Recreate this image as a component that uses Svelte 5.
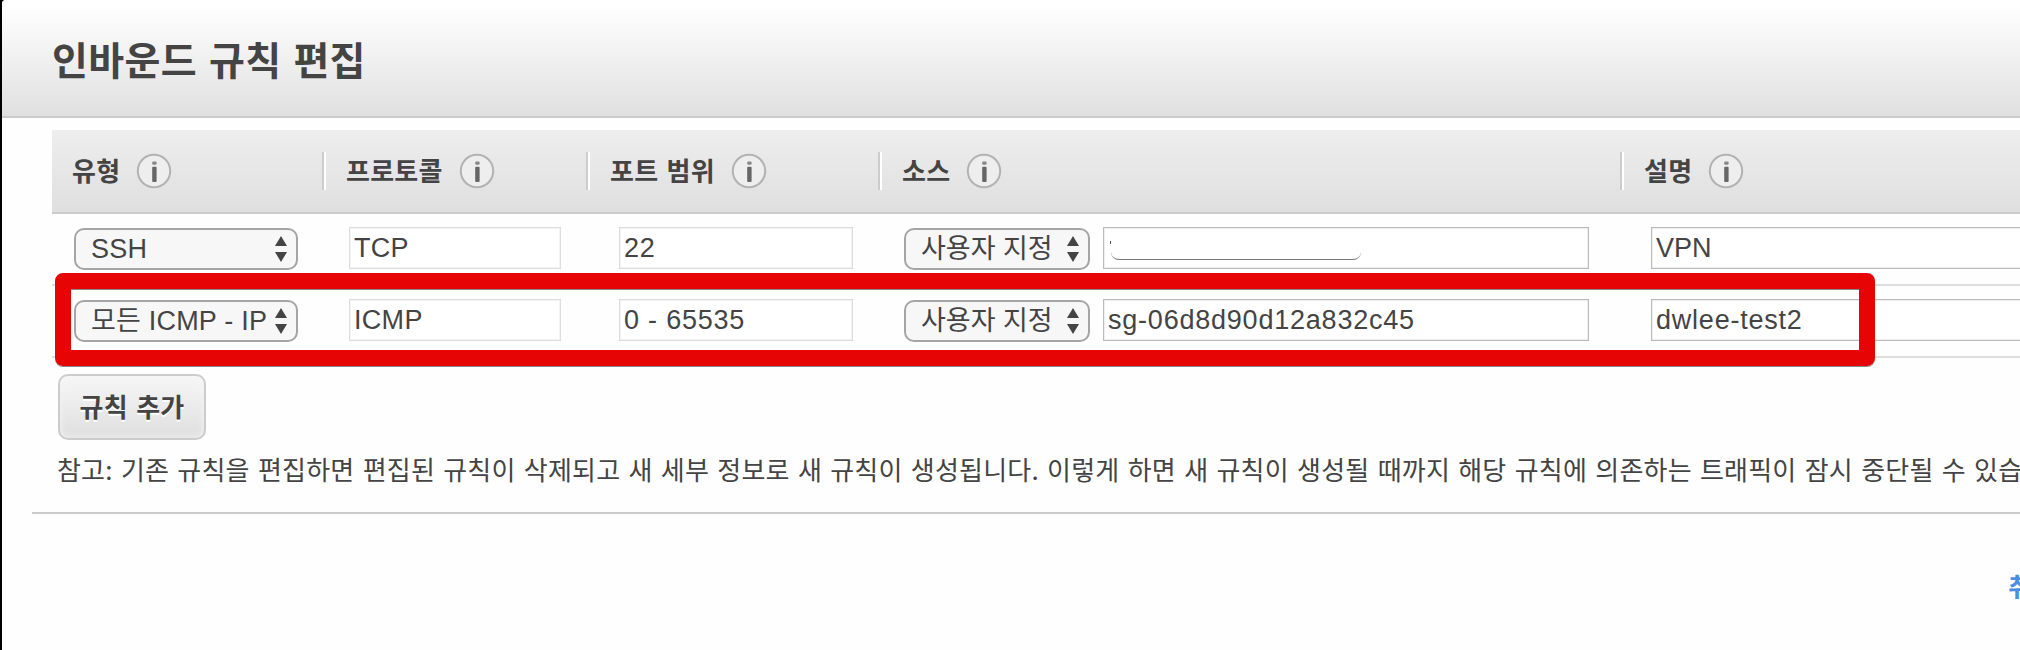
<script>
  const columns = ['유형', '프로토콜', '포트 범위', '소스', '설명'];
  const rules = [
    { type: 'SSH', protocol: 'TCP', port: '22', from: '사용자 지정', source: '', desc: 'VPN', hidden: true },
    { type: '모든 ICMP - IPv4', protocol: 'ICMP', port: '0 - 65535', from: '사용자 지정', source: 'sg-06d8d90d12a832c45', desc: 'dwlee-test2', hidden: false }
  ];
</script>

{#snippet info()}
  <svg class="info" width="36" height="36" viewBox="0 0 36 36">
    <circle cx="18" cy="18" r="16.2" fill="#eeeeee" stroke="#b2b2b2" stroke-width="2" />
    <rect x="16.2" y="8.5" width="4.4" height="3.2" rx="1" fill="#888" />
    <rect x="16.2" y="13.8" width="4.4" height="15.2" rx="1" fill="#666" />
  </svg>
{/snippet}

{#snippet select(label)}
  <div class="select">
    <span class="value">{label}</span>
    <svg width="14" height="26" viewBox="0 0 14 26">
      <path d="M7 0L13 10H1Z M7 26L13 16H1Z" fill="#444" />
    </svg>
  </div>
{/snippet}

<div class="dialog">
  <header><h1>인바운드 규칙 편집</h1></header>
  <main>
    <div class="table">
      <div class="grid head">
        {#each columns as name}
          <div class="th"><span>{name}</span>{@render info()}</div>
        {/each}
      </div>
      {#each rules as rule}
        <div class="grid row">
          <div class="cell type">{@render select(rule.type)}</div>
          <div class="cell protocol"><div class="input off">{rule.protocol}</div></div>
          <div class="cell port"><div class="input off">{rule.port}</div></div>
          <div class="cell source">
            {@render select(rule.from)}
            <div class="input">{rule.source}{#if rule.hidden}<i class="cover"></i>{/if}</div>
          </div>
          <div class="cell desc"><div class="input" class:caps={rule.desc === rule.desc.toUpperCase()}>{rule.desc}</div></div>
        </div>
      {/each}
      <div class="highlight"></div>
    </div>
    <button>규칙 추가</button>
    <p>참고: 기존 규칙을 편집하면 편집된 규칙이 삭제되고 새 세부 정보로 새 규칙이 생성됩니다. 이렇게 하면 새 규칙이 생성될 때까지 해당 규칙에 의존하는 트래픽이 잠시 중단될 수 있습니다.</p>
  </main>
  <footer><a href="#cancel">취소</a></footer>
</div>

<style>
  :global(body) { margin: 0; background: #fefefe; overflow: hidden; }
  .dialog {
    box-sizing: border-box;
    width: 2020px;
    height: 650px;
    border-left: 2px solid #000;
    background: #fefefe;
    color: #444;
    font: 26px/36px "Liberation Sans", "Noto Sans CJK KR", sans-serif;
    overflow: hidden;
  }
  header {
    box-sizing: border-box;
    height: 118px;
    padding: 0 50px;
    display: flex;
    align-items: center;
    border-bottom: 2px solid #ccc;
    border-top-left-radius: 4px;
    background: linear-gradient(#fff 5%, #e0e0e0);
    box-shadow: -2px -2px 0 #000;
  }
  h1 { margin: 0; font: bold 39px/56px "Noto Sans CJK KR", sans-serif; letter-spacing: 0.35px; word-spacing: 2.8px; }
  main { padding-top: 12px; }
  .table { position: relative; margin-left: 50px; }
  .grid { display: grid; grid-template-columns: 274px 264px 292px 742px 1fr; }
  .head {
    box-sizing: border-box;
    height: 84px;
    align-items: center;
    border-bottom: 2px solid #ccc;
    background: linear-gradient(#eee, #dfdfdf);
  }
  .th {
    box-sizing: border-box;
    height: 38px;
    padding-left: 20px;
    display: flex;
    align-items: center;
    gap: 16px;
    border-right: 2px solid #fff;
    box-shadow: inset -2px 0 #ccc;
    font: bold 26px/36px "Noto Sans CJK KR", sans-serif;
    letter-spacing: 0.25px;
    word-spacing: 2px;
    white-space: nowrap;
  }
  .th span { padding-bottom: 2px; }
  .th:last-child { border: 0; box-shadow: none; }
  .row { box-sizing: border-box; height: 72px; border-bottom: 2px solid #ddd; }
  .cell { display: flex; padding-top: 13px; font-size: 27px; min-width: 0; }
  .type { padding-left: 22px; }
  .type .select { width: 224px; letter-spacing: 0.2px; }
  .protocol { padding-left: 23px; }
  .protocol .input { width: 212px; letter-spacing: 0.3px; }
  .port { padding-left: 29px; }
  .port .input { width: 234px; }
  .source { padding-left: 22px; gap: 13px; }
  .source .select { width: 186px; }
  .source .input { width: 486px; }
  .desc { padding-left: 27px; }
  .desc .input { flex: 1; margin-right: -4px; }
  .select {
    box-sizing: border-box;
    height: 42px;
    margin-top: 1px;
    padding: 0 8px 0 15px;
    display: flex;
    align-items: center;
    gap: 8px;
    border: 2px solid #a5a5a5;
    border-radius: 10px;
    background: #f7f7f7;
  }
  .value { flex: 1; overflow: hidden; white-space: nowrap; line-height: 38px; }
  .input {
    position: relative;
    box-sizing: border-box;
    height: 42px;
    padding-left: 4px;
    border: 1px solid #bbb;
    box-shadow: inset 0 0 0 1px #eee;
    background: #fff;
    line-height: 41px;
    letter-spacing: 0.78px;
    white-space: nowrap;
  }
  .off { border-color: #ddd; box-shadow: inset 0 0 0 1px #f3f3f3; }
  .caps { letter-spacing: 0; }
  .cover {
    position: absolute;
    left: 7px;
    top: 8px;
    width: 250px;
    height: 24px;
    box-sizing: border-box;
    border-bottom: 1px solid #777;
    border-radius: 0 0 8px 8px;
  }
  .cover::before { content: ""; position: absolute; left: -1px; top: 5px; width: 1px; height: 3px; background: #555; }
  .highlight {
    position: absolute;
    left: 3px;
    top: 143px;
    width: 1820px;
    height: 93px;
    box-sizing: border-box;
    border: 16px solid #e60404;
    border-radius: 8px;
    box-shadow: 0 1px 0 #888, inset 0 1px 0 #888;
  }
  button {
    display: block;
    box-sizing: border-box;
    width: 148px;
    height: 66px;
    margin: 16px 0 0 56px;
    padding: 0 0 2px;
    border: 2px solid #ccc;
    border-radius: 10px;
    background: linear-gradient(#f6f6f6, #dfdfdf);
    box-shadow: inset 0 0 6px #f4f4f4;
    color: #444;
    font: bold 26px/38px "Noto Sans CJK KR", sans-serif;
    letter-spacing: 0.2px;
    word-spacing: 2.2px;
    text-shadow: 0 2px 0 #fff;
  }
  p {
    box-sizing: border-box;
    height: 74px;
    margin: 0 0 0 30px;
    padding: 10px 0 0 25px;
    border-bottom: 2px solid #ccc;
    font: 26px/38px "Noto Sans CJK KR", sans-serif;
    letter-spacing: 0.2px;
    word-spacing: 2.2px;
    white-space: nowrap;
  }
  footer { display: flex; padding: 53px 0 0 2006px; }
  a { color: #4a8fe0; font: bold 26px/38px "Noto Sans CJK KR", sans-serif; text-decoration: none; white-space: nowrap; }
</style>
